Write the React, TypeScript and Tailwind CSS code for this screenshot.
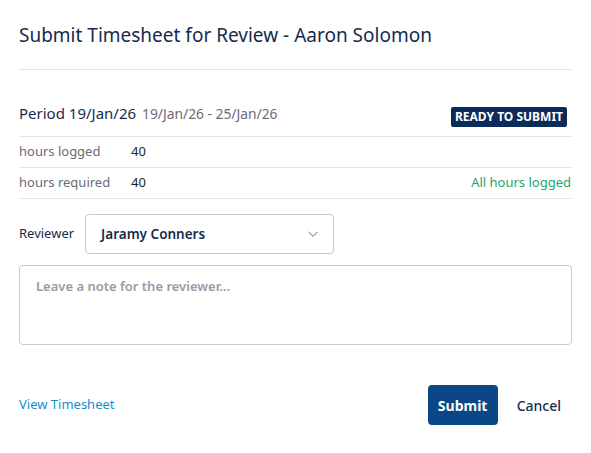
import React from "react";

export default function App() {
  return (
    <div className="w-[591px] h-[453px] bg-white px-[19px] text-[#172b4d]" style={{ fontFamily: '"Noto Sans", sans-serif' }}>
      <div className="h-[70px] flex items-center border-b border-[#e2e2ea]">
        <h1 className="text-[19px] text-[#172b4d] leading-none pt-[2px]">Submit Timesheet for Review - Aaron Solomon</h1>
      </div>
      <div className="pt-[32px]">
        <div className="h-[35px] flex items-start justify-between border-b border-[#e2e2ea] pr-[5px]">
          <div className="flex items-baseline gap-[6px] h-[22px]">
            <span className="text-[15px] leading-[22px] text-[#172b4d]">Period 19/Jan/26</span>
            <span className="text-[13.8px] leading-[22px] text-[#6b6b78]">19/Jan/26 - 25/Jan/26</span>
          </div>
          <span className="mt-[5px] bg-[#0b2c5a] text-white text-[12px] font-bold rounded-[2px] px-[4px] h-[20px] flex items-center">READY TO SUBMIT</span>
        </div>
        <div className="h-[31px] flex items-center border-b border-[#e2e2ea] text-[13px]">
          <span className="w-[112px] text-[#6b6b78]">hours logged</span>
          <span className="text-[#1f2430]">40</span>
        </div>
        <div className="h-[31px] flex items-center border-b border-[#e2e2ea] text-[13px] pr-[1px]">
          <span className="w-[112px] text-[#6b6b78]">hours required</span>
          <span className="text-[#1f2430]">40</span>
          <span className="ml-auto text-[#1ea56a]">All hours logged</span>
        </div>
      </div>
      <div className="mt-[15px] flex items-center gap-[11px]">
        <span className="text-[13px] text-[#172b4d]">Reviewer</span>
        <div className="w-[249px] h-[40px] border border-[#c9c9d2] rounded-[4px] flex items-center justify-between pl-[15px] pr-[13px]">
          <span className="text-[13.5px] font-semibold text-[#172b4d]">Jaramy Conners</span>
          <svg width="14" height="14" viewBox="0 0 24 24" fill="none" stroke="#5a5f73" strokeWidth="1.6" strokeLinecap="round" strokeLinejoin="round"><path d="M5 9l7 7 7-7" /></svg>
        </div>
      </div>
      <div className="mt-[11px] h-[80px] border border-[#c9c9d2] rounded-[4px] px-[16px] pt-[7px]">
        <span className="text-[13px] font-semibold text-[#9a9aa6]">Leave a note for the reviewer...</span>
      </div>
      <div className="mt-[40px] flex items-center">
        <a className="text-[13px] text-[#1a8ccc]">View Timesheet</a>
        <div className="ml-auto flex items-center">
          <button className="h-[40px] w-[70px] bg-[#0b4787] text-white text-[14px] font-bold rounded-[4px]">Submit</button>
          <button className="ml-[19px] mr-[11px] text-[14px] font-medium text-[#172b4d]">Cancel</button>
        </div>
      </div>
    </div>
  );
}
